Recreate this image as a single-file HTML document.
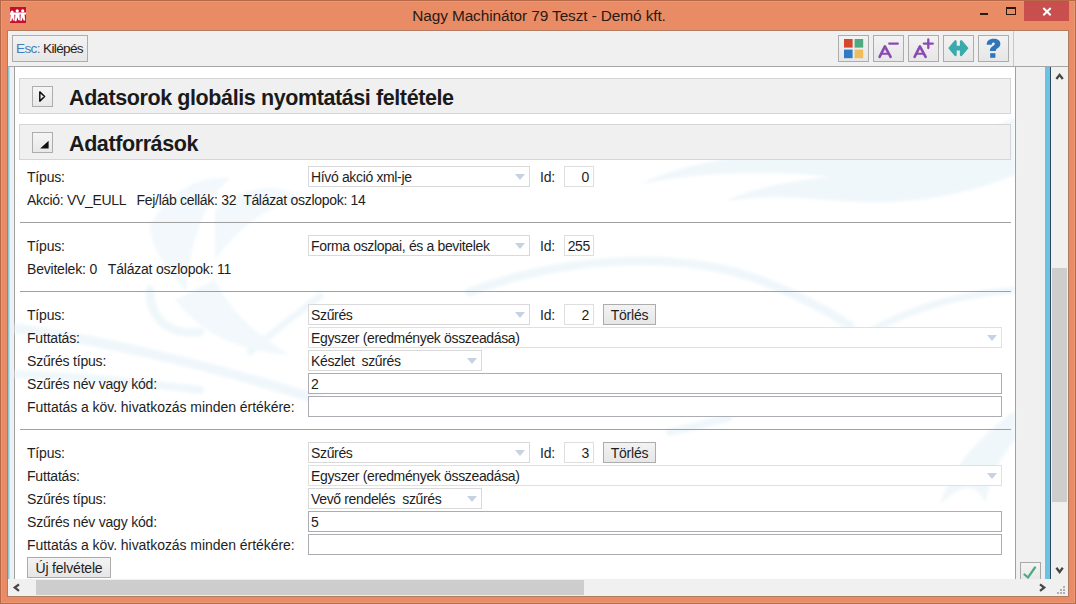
<!DOCTYPE html>
<html><head><meta charset="utf-8">
<style>
*{box-sizing:border-box}
html,body{margin:0;padding:0;width:1076px;height:604px;overflow:hidden;font-family:"Liberation Sans",sans-serif}
body{position:relative;background:#E98B66}
.a{position:absolute}
#frame{left:0;top:0;width:1076px;height:604px;border:1px solid #B86A48;background:#E98C66;box-shadow:inset 0 0 0 1px #EA9874}
#title{left:0;top:0;width:1076px;height:30px;text-align:center;font-size:15.4px;letter-spacing:-0.1px;line-height:31px;color:#2A1A14;padding-left:2px}
#client{left:7px;top:30px;width:1062px;height:567px;background:#F0F0F0;border:1px solid #B37A62;box-shadow:inset 0 0 0 1px #FFEFE8}
.btn{background:linear-gradient(#F3F3F3,#E6E6E6);border:1px solid #ACACAC}
.tb{top:35px;width:31px;height:27px}
.lbl{font-size:14px;letter-spacing:-0.2px;color:#1E1E1E;white-space:pre;line-height:16px}
.dd{background:#fff;border:1px solid #D9D9D9;height:21px}
.tx{background:#fff;border:1px solid #ABADB3;height:21px}
.dd span,.tx span{position:absolute;left:2px;top:2px;font-size:14px;letter-spacing:-0.35px;line-height:16px;color:#1E1E1E;white-space:pre}
.arr{position:absolute;width:0;height:0;border-left:5.5px solid transparent;border-right:5.5px solid transparent;border-top:6px solid #C6D2E2;top:7px}
.sep{height:1px;background:#A0A0A0;left:20px;width:991px}
.hdr{left:19px;width:992px;height:36px;background:#F0F0F0;border:1px solid #D5D5D5}
.hdr b{position:absolute;left:49px;top:8px;font-size:21.5px;letter-spacing:-0.4px;line-height:22px;color:#1A1A1A}
.exp{position:absolute;left:12px;top:7px;width:21px;height:21px;border:1px solid #ADADAD;background:linear-gradient(#F5F5F5,#E8E8E8)}
</style></head><body>
<div id="frame" class="a"></div>
<!-- app icon -->
<svg class="a" style="left:10px;top:7px" width="16" height="16" viewBox="0 0 16 16">
<rect width="16" height="16" fill="#C50F2F"/>
<g fill="#fff">
<circle cx="2.1" cy="5" r="1.5"/><circle cx="7.2" cy="3.9" r="1.6"/><circle cx="12.7" cy="3.9" r="1.6"/>
<path d="M0 5.4 H16 V7.5 H14.6 L15.2 13.6 H13.6 L12.7 10.6 L11.8 13.8 H10.2 L10.8 7.6 H9.5 L9.9 13.2 H8.3 L7.3 10.2 L6.4 14.2 H4.8 L5.4 7.8 H4.3 L4.6 13.4 H3 L2.2 10.8 L1.3 14.2 H0 L0.6 7.8 H0 Z"/>
</g></svg>
<div id="title" class="a">Nagy Machinátor 79 Teszt - Demó kft.</div>
<!-- window controls -->
<div class="a" style="left:980px;top:13px;width:8px;height:2px;background:#2A1A12"></div>
<div class="a" style="left:1006px;top:7px;width:10px;height:8px;border:1px solid #2A1A12;border-top-width:2px"></div>
<div class="a" style="left:1024px;top:1px;width:45px;height:20px;background:#C84F4D"></div>
<svg class="a" style="left:1042px;top:7px" width="10" height="9" viewBox="0 0 10 9"><path d="M1.3 1 L8.7 8.3 M8.7 1 L1.3 8.3" stroke="#fff" stroke-width="2"/></svg>

<div id="client" class="a"></div>
<!-- toolbar -->
<div class="a btn" style="left:12px;top:35px;width:76px;height:27px"></div>
<div class="a lbl" style="left:16px;top:41px;font-size:13.6px;letter-spacing:-0.65px"><span style="color:#3F7FC0">Esc:</span> Kilépés</div>
<div class="a" style="left:8px;top:66px;width:1060px;height:1px;background:#A5A5A5"></div>
<div class="a" style="left:1013px;top:31px;width:1px;height:35px;background:#C8C8C8"></div>
<div class="a btn tb" style="left:838px"></div>
<div class="a btn tb" style="left:873px"></div>
<div class="a btn tb" style="left:908px"></div>
<div class="a btn tb" style="left:943px"></div>
<div class="a btn tb" style="left:978px"></div>
<svg class="a" style="left:0;top:0" width="1076" height="70">
<rect x="844" y="39" width="8.6" height="8.6" fill="#D4472C"/>
<rect x="854.6" y="39" width="8.6" height="8.6" fill="#4FAA7F"/>
<rect x="844" y="49.6" width="8.6" height="8.6" fill="#2D7CC3"/>
<rect x="854.6" y="49.6" width="8.6" height="8.6" fill="#EFBC5C"/>
<g stroke="#8B4AB3" fill="none" stroke-linecap="round" stroke-linejoin="round">
<path d="M879.6 56.8 L884.9 46.3 L890.6 56.8" stroke-width="2.6"/>
<path d="M882 53.7 H888" stroke-width="2"/>
<path d="M889.2 43.6 H897.8" stroke-width="2.3"/>
<path d="M914.6 56.8 L919.9 46.3 L925.6 56.8" stroke-width="2.6"/>
<path d="M917 53.7 H923" stroke-width="2"/>
<path d="M923.8 43.6 H932.8 M928.3 39.5 V48" stroke-width="2.3"/>
</g>
<path d="M949 48.2 L954.8 41.2 Q955.9 40 956.1 41.6 V46.4 H960.5 V41.6 Q960.7 40 961.8 41.2 L967.8 48.2 L961.8 55.2 Q960.7 56.4 960.5 54.8 V50 H956.1 V54.8 Q955.9 56.4 954.8 55.2 Z" fill="#3AABAD" stroke="#3AABAD" stroke-width="1.2" stroke-linejoin="round"/>
<path d="M986.7 44.8 C986.5 40.8 989.6 38.8 993.6 38.8 C997.8 38.8 1000.4 40.8 1000.4 43.8 C1000.4 46.6 998.4 47.8 996.8 48.7 C996.1 49.2 995.9 49.7 995.9 51.1 L989.9 51.1 C989.9 48.6 990.6 47.4 992.6 46.2 C994.2 45.2 994.8 44.6 994.8 43.8 C994.8 42.9 994.2 42.4 993.4 42.4 C992.4 42.4 991.8 43.2 991.8 44.8 Z" fill="#2E75BA"/>
<rect x="990.2" y="53.2" width="5.2" height="4.6" fill="#2E75BA"/>
</svg>

<!-- side bars -->
<div class="a" style="left:8px;top:67px;width:1px;height:512px;background:#92C6D6"></div><div class="a" style="left:9px;top:67px;width:1px;height:512px;background:#B3E1F1"></div><div class="a" style="left:10px;top:67px;width:1px;height:512px;background:#E6F3F8"></div>
<div class="a" style="left:14px;top:67px;width:1px;height:512px;background:#A0A0A0"></div>
<div class="a" style="left:15px;top:67px;width:1000px;height:512px;background:#FFFFFF"></div>
<svg class="a" style="left:15px;top:67px;filter:blur(1.5px)" width="1000" height="512" viewBox="15 67 1000 512">
<g fill="#F0F7FB" stroke="none">
<path d="M640 184 C690 160 770 148 860 148 C930 146 980 132 1015 118 L1015 175 C960 198 900 206 840 201 C790 197 760 196 725 201 C755 187 795 180 830 177 C770 170 700 172 640 184 Z"/>
<path d="M940 505 C950 470 975 440 1015 410 L1015 440 C990 470 985 500 987 505 C975 480 960 485 940 505 Z"/>
</g>
<g fill="none" stroke="#F0F7FB" stroke-linecap="round">
<path d="M470 292 C560 257 680 250 760 280 C800 296 830 312 850 326" stroke-width="9"/>
<path d="M862 336 C920 302 970 294 1015 290" stroke-width="7"/>
<path d="M10 328 C90 338 200 362 320 400" stroke-width="10"/><path d="M10 374 C80 376 140 382 200 390" stroke-width="8"/><path d="M150 290 C150 318 168 336 200 332" stroke-width="9"/><path d="M320 296 C295 315 270 335 250 352" stroke-width="7"/>
<path d="M670 432 C690 428 710 422 728 418" stroke-width="8"/>
</g>
<g fill="#F2F8FC">
<path d="M150 225 C170 190 200 175 230 178 C205 200 190 240 186 292 C170 270 150 250 150 225 Z"/>
<path d="M215 210 C250 180 290 185 300 200 C270 205 240 225 215 260 Z"/>
<path d="M175 300 C200 330 230 350 290 355 C250 330 230 310 215 280 Z"/>
</g>
</svg>
<div class="a" style="left:1015px;top:67px;width:1px;height:512px;background:#A0A0A0"></div>
<div class="a" style="left:1045px;top:67px;width:5px;height:512px;background:#6CC2E6"></div>
<div class="a" style="left:1050px;top:67px;width:1px;height:512px;background:#2D4A5A"></div>
<div class="a" style="left:1051px;top:67px;width:17px;height:512px;background:#F0F0F0"></div>
<div class="a" style="left:1052px;top:268px;width:15px;height:234px;background:#CDCDCD"></div>
<!-- h scrollbar -->
<div class="a" style="left:8px;top:579px;width:1060px;height:17px;background:#F0F0F0"></div>
<div class="a" style="left:36px;top:580px;width:548px;height:15px;background:#CDCDCD"></div>
<svg class="a" style="left:0;top:0" width="1076" height="604">
<g stroke="#474747" stroke-width="2.3" fill="none">
<path d="M1056.4 79 L1059.6 74.8 L1062.8 79"/>
<path d="M1056.4 567.8 L1059.6 572 L1062.8 567.8"/>
<path d="M19 584.4 L14.8 587.6 L19 590.8"/>
<path d="M1040 584.4 L1044.2 587.6 L1040 590.8"/>
</g>
<g fill="#B0B0B0">
<rect x="1063" y="586" width="2" height="2"/>
<rect x="1060" y="589" width="2" height="2"/><rect x="1063" y="589" width="2" height="2"/>
<rect x="1057" y="592" width="2" height="2"/><rect x="1060" y="592" width="2" height="2"/><rect x="1063" y="592" width="2" height="2"/>
</g>
</svg>

<!-- content -->
<div class="a hdr" style="top:78px"><div class="exp"><svg class="a" style="left:0;top:0" width="21" height="21"><path d="M6.8 4.9 L11.6 9.5 L6.8 14.1 Z" stroke="#111" stroke-width="1.5" fill="none" stroke-linejoin="round"/></svg></div><b>Adatsorok globális nyomtatási feltétele</b></div>
<div class="a hdr" style="top:124px"><div class="exp"><svg class="a" style="left:0;top:0" width="21" height="21"><path d="M7.2 15.6 L15.6 7.8 V15.6 Z" fill="#111"/></svg></div><b>Adatforrások</b></div>

<!-- block 1 -->
<div class="a lbl" style="left:27px;top:169px">Típus:</div>
<div class="a dd" style="left:308px;top:166px;width:222px"><span>Hívó akció xml-je</span><i class="arr" style="left:206px"></i></div>
<div class="a lbl" style="left:540px;top:169px">Id:</div>
<div class="a dd" style="left:564px;top:166px;width:30px;border-color:#DEDEDE"><span style="left:auto;right:4px">0</span></div>
<div class="a lbl" style="left:27px;top:192px;letter-spacing:-0.3px">Akció: VV_EULL   Fej/láb cellák: 32  Tálázat oszlopok: 14</div>
<div class="a sep" style="top:222px"></div>

<!-- block 2 -->
<div class="a lbl" style="left:27px;top:238px">Típus:</div>
<div class="a dd" style="left:308px;top:235px;width:222px"><span>Forma oszlopai, és a bevitelek</span><i class="arr" style="left:206px"></i></div>
<div class="a lbl" style="left:540px;top:238px">Id:</div>
<div class="a dd" style="left:564px;top:235px;width:30px;border-color:#DEDEDE"><span style="left:auto;right:3px">255</span></div>
<div class="a lbl" style="left:27px;top:261px">Bevitelek: 0   Tálázat oszlopok: 11</div>
<div class="a sep" style="top:291px"></div>

<div class="a lbl" style="left:27px;top:307px">Típus:</div>
<div class="a dd" style="left:308px;top:304px;width:222px"><span>Szűrés</span><i class="arr" style="left:206px"></i></div>
<div class="a lbl" style="left:540px;top:307px">Id:</div>
<div class="a dd" style="left:564px;top:304px;width:30px;border-color:#DEDEDE"><span style="left:auto;right:4px">2</span></div>
<div class="a btn" style="left:603px;top:304px;width:53px;height:21px"></div>
<div class="a lbl" style="left:603px;top:307px;width:53px;text-align:center">Törlés</div>
<div class="a lbl" style="left:27px;top:330px">Futtatás:</div>
<div class="a dd" style="left:308px;top:327px;width:694px;border-color:#E0E0E0"><span>Egyszer (eredmények összeadása)</span><i class="arr" style="left:678px"></i></div>
<div class="a lbl" style="left:27px;top:353px">Szűrés típus:</div>
<div class="a dd" style="left:308px;top:350px;width:174px"><span>Készlet  szűrés</span><i class="arr" style="left:158px"></i></div>
<div class="a lbl" style="left:27px;top:376px">Szűrés név vagy kód:</div>
<div class="a tx" style="left:308px;top:373px;width:694px"><span>2</span></div>
<div class="a lbl" style="left:27px;top:399px;letter-spacing:-0.05px">Futtatás a köv. hivatkozás minden értékére:</div>
<div class="a tx" style="left:308px;top:396px;width:694px"></div>
<div class="a sep" style="top:429px"></div>

<div class="a lbl" style="left:27px;top:445px">Típus:</div>
<div class="a dd" style="left:308px;top:442px;width:222px"><span>Szűrés</span><i class="arr" style="left:206px"></i></div>
<div class="a lbl" style="left:540px;top:445px">Id:</div>
<div class="a dd" style="left:564px;top:442px;width:30px;border-color:#DEDEDE"><span style="left:auto;right:4px">3</span></div>
<div class="a btn" style="left:603px;top:442px;width:53px;height:21px"></div>
<div class="a lbl" style="left:603px;top:445px;width:53px;text-align:center">Törlés</div>
<div class="a lbl" style="left:27px;top:468px">Futtatás:</div>
<div class="a dd" style="left:308px;top:465px;width:694px;border-color:#E0E0E0"><span>Egyszer (eredmények összeadása)</span><i class="arr" style="left:678px"></i></div>
<div class="a lbl" style="left:27px;top:491px">Szűrés típus:</div>
<div class="a dd" style="left:308px;top:488px;width:174px"><span>Vevő rendelés  szűrés</span><i class="arr" style="left:158px"></i></div>
<div class="a lbl" style="left:27px;top:514px">Szűrés név vagy kód:</div>
<div class="a tx" style="left:308px;top:511px;width:694px"><span>5</span></div>
<div class="a lbl" style="left:27px;top:537px;letter-spacing:-0.05px">Futtatás a köv. hivatkozás minden értékére:</div>
<div class="a tx" style="left:308px;top:534px;width:694px"></div>

<div class="a btn" style="left:27px;top:557px;width:84px;height:21px"></div>
<div class="a lbl" style="left:27px;top:560px;width:84px;text-align:center">Új felvétele</div>
<!-- check button (clipped) -->
<div class="a" style="left:1020px;top:562px;width:21px;height:17px;border:1px solid #A8A8A8;border-bottom:none;background:linear-gradient(#F4F4F4,#E8E8E8)"></div>
<svg class="a" style="left:1020px;top:562px" width="21" height="17"><path d="M4.5 12.5 L8 15.5 L15 5.5" stroke="#4FAA80" stroke-width="2.2" fill="none" stroke-linecap="round"/></svg>
</body></html>
